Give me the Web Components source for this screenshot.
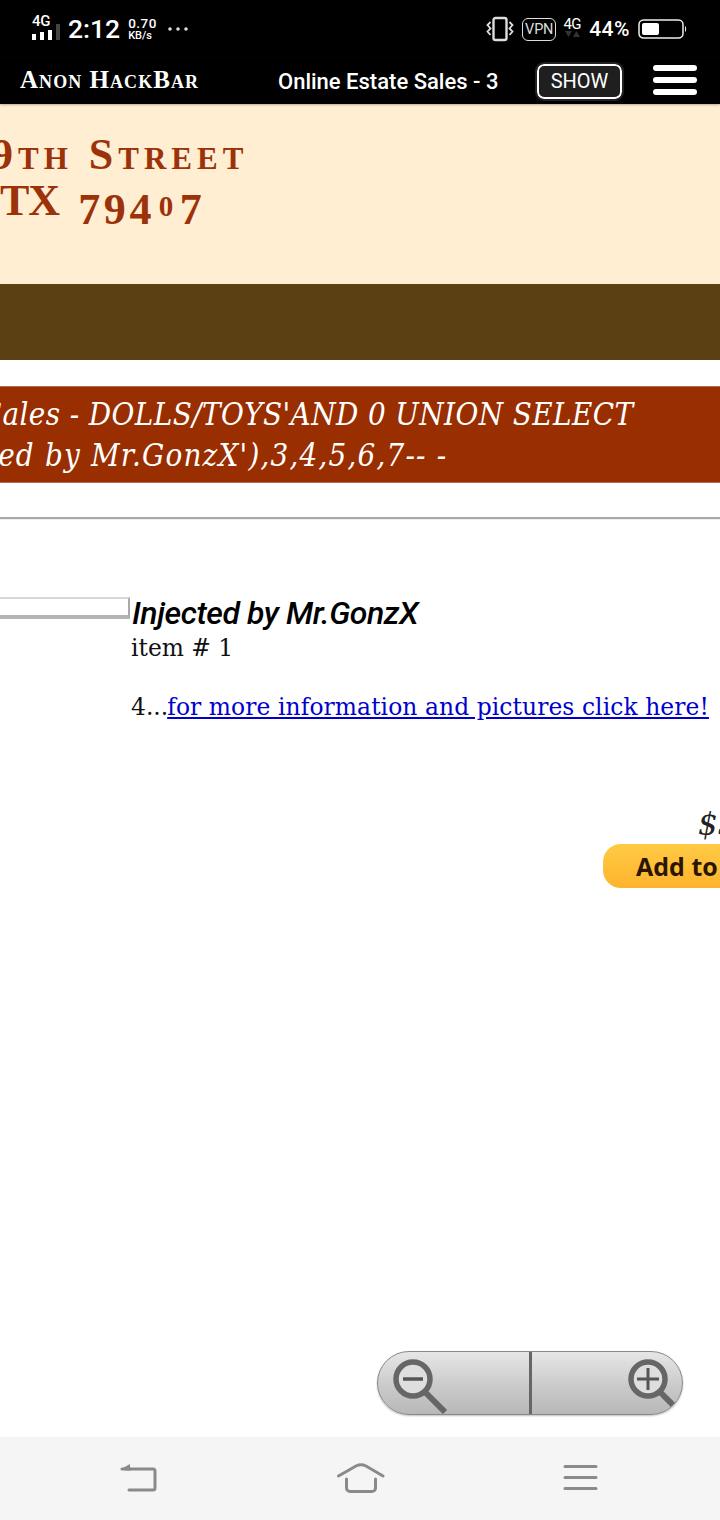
<!DOCTYPE html>
<html lang="en"><head><meta charset="utf-8"><title>Online Estate Sales</title>
<style>
html,body{margin:0;padding:0;height:1520px;overflow:hidden;background:#fff}
body{display:flex;flex-direction:column;width:720px}
</style></head><body>
<status-bar></status-bar>
<hack-bar></hack-bar>
<site-banner></site-banner>
<page-title></page-title>
<item-listing></item-listing>
<nav-bar></nav-bar>
<script>
function def(name,html){
  customElements.define(name,class extends HTMLElement{
    constructor(){super();this.attachShadow({mode:'open'}).innerHTML=html;}
  });
}
def('status-bar',`<style>
:host{display:flex;align-items:center;height:58px;background:#000;color:#fff;font-family:Roboto,sans-serif;flex:none}
.left{display:flex;align-items:center;margin-left:32px}
.sig{display:flex;flex-direction:column;align-items:flex-start;width:36px}
.sig b{font-size:15px;line-height:13px;font-weight:500;letter-spacing:-.3px;margin-top:-3px}
.time{font-size:26.500px;font-weight:500;line-height:28px}
.speed{display:flex;flex-direction:column;margin-left:8px;font-weight:500}
.speed span:first-child{font-size:13.500px;line-height:13px;letter-spacing:.5px}
.speed span:last-child{font-size:11px;line-height:11px}
.right{margin-left:auto;display:flex;align-items:center;margin-right:32px}
.vpn{border:1.500px solid #ddd;border-radius:6px;font-size:14.500px;color:#ddd;height:21px;width:32px;text-align:center;line-height:21px;margin-left:8px;letter-spacing:-.2px}
.net{display:flex;flex-direction:column;align-items:center;margin-left:6px;width:20px}
.net b{font-size:15px;font-weight:400;line-height:14px;letter-spacing:-.6px;margin-top:-4px}
.pct{font-size:21px;font-weight:500;margin-left:7px;letter-spacing:.5px}
svg{display:block;overflow:visible}
</style>
<div class="left">
 <div class="sig"><b>4G</b><svg width="28" height="10" viewBox="0 0 28 10" style="margin-top:2px"><rect x="0" y="4" width="4" height="6" fill="#fff"/><rect x="8" y="2" width="4" height="8" fill="#fff"/><rect x="16" y="0" width="4" height="10" fill="#fff"/><rect x="24" y="-6" width="4" height="16" fill="#444"/></svg></div>
 <span class="time">2:12</span>
 <div class="speed"><span>0.70</span><span>KB/s</span></div>
 <svg width="22" height="6" viewBox="0 0 22 6" style="margin-left:10px"><circle cx="3" cy="3" r="1.800" fill="#ddd"/><circle cx="11" cy="3" r="1.800" fill="#ddd"/><circle cx="19" cy="3" r="1.800" fill="#ddd"/></svg>
</div>
<div class="right">
 <svg width="28" height="24" viewBox="0 0 28 24" fill="none" stroke="#ddd"><rect x="7.500" y="1" width="13" height="22" rx="2" stroke-width="2.400"/><path d="M4.500 5l-3 3 3 3.500-3 3 3 3.500M23.500 5l3 3-3 3.500 3 3-3 3.500" stroke-width="1.800"/></svg>
 <div class="vpn">VPN</div>
 <div class="net"><b>4G</b><svg width="16" height="7" viewBox="0 0 16 7"><path d="M1 0h7l-3.500 6zM9 6h7l-3.500-6z" fill="#333"/></svg></div>
 <span class="pct">44%</span>
 <svg width="50" height="22" viewBox="0 0 50 22" style="margin-left:8px"><rect x="1" y="2" width="44" height="18" rx="4.500" fill="none" stroke="#eee" stroke-width="1.500"/><rect x="4" y="5" width="17" height="12" rx="2" fill="#fff"/><path d="M47 8c1.500 .5 1.500 5.500 0 6z" fill="#eee"/></svg>
</div>`);
def('hack-bar',`<style>
:host{display:flex;align-items:center;height:46px;background:#000;color:#fff;flex:none;box-shadow:0 1px 2px rgba(120,110,90,.5);position:relative}
.logo{font:bold 25px "Liberation Serif",serif;font-variant:small-caps;margin-left:20px;width:258px;letter-spacing:1.050px;margin-top:-2px;white-space:nowrap}
.title{font:500 22px Roboto,sans-serif;width:259px;white-space:nowrap}
.show{box-sizing:border-box;width:85px;height:35px;border:2.500px solid #fff;border-radius:7px;background:#1f1f1f;outline:2px solid #222;font:400 20px/31px Roboto,sans-serif;text-align:center;margin-top:0}
.menu{margin-left:31px;display:flex;flex-direction:column;gap:6px;margin-top:-2px}
.menu i{display:block;width:44px;height:6px;background:#fff;border-radius:3px}
</style>
<div class="logo">Anon HackBar</div><div class="title">Online Estate Sales - 3</div><div class="show">SHOW</div><div class="menu"><i></i><i></i><i></i></div>`);
def('site-banner',`<style>
:host{display:block;flex:none;height:180px;background:#ffeed1;color:#9c3209;font-family:"Liberation Serif",serif;font-weight:bold;overflow:hidden;white-space:nowrap;box-sizing:border-box;padding-top:26px}
.a{font-size:44px;line-height:50px;font-variant:small-caps;letter-spacing:5px;margin-left:-9px;height:50px}
.b{font-size:44px;line-height:50px;margin-left:0;margin-top:-4px;height:50px}
.b i{font-style:normal;vertical-align:-9px;letter-spacing:3.700px}
.b u{text-decoration:none;font-size:29px;vertical-align:-1px;letter-spacing:6.500px;margin-left:3.500px}
.b s{text-decoration:none;margin-right:19px;letter-spacing:-1px}
</style>
<div class="a">9th Street</div>
<div class="b"><s>TX</s><i>794</i><u>0</u><i>7</i></div>`);
def('page-title',`<style>
:host{display:block;flex:none}
.brown{height:76px;background:#5a4012}
.red{margin-top:26px;height:97px;background:#992e00;color:#fff;font:italic 31px/41px "DejaVu Serif Condensed","DejaVu Serif",serif;white-space:nowrap;overflow:hidden;box-sizing:border-box;padding-top:7px;letter-spacing:.4px;border-top:1px solid #b56a4a;border-bottom:1px solid #b56a4a}
.red div:first-child{margin-left:-17px}
.red div:last-child{margin-left:-90px;letter-spacing:1.200px}
hr{margin:34px 0 0;border:0;height:2px;background:#a8a8a8;box-shadow:0 1px 0 #eee}
</style>
<div class="brown"></div>
<div class="red"><div>Sales - DOLLS/TOYS'AND 0 UNION SELECT</div><div>Injected by Mr.GonzX'),3,4,5,6,7-- -</div></div>
<hr>`);
def('zoom-control',`<style>
:host{display:flex;position:absolute;right:37px;bottom:22px;width:306px;height:64px;box-sizing:border-box;border:1.500px solid #888;border-radius:32px;overflow:hidden;background:linear-gradient(#e6e6e6,#c8c8c8 60%,#b8b8b8);box-shadow:0 1px 2px rgba(0,0,0,.25)}
.b{flex:1;display:flex;align-items:center}
.b+.b{border-left:3px solid #666;justify-content:flex-end}
svg{display:block}
</style>
<div class="b"><svg width="62" height="62" viewBox="0 0 62 62" style="margin-left:10px;margin-top:4px" fill="none" stroke="#666"><circle cx="25" cy="25" r="17" fill="#dedede" stroke-width="5.500"/><path d="M37 38l20 20" stroke-width="6"/><path d="M15 25h20" stroke-width="3.500" stroke="#555"/></svg></div>
<div class="b"><svg width="62" height="62" viewBox="0 0 62 62" style="margin-right:-3px;margin-top:4px" fill="none" stroke="#666"><circle cx="25" cy="25" r="17" fill="#dedede" stroke-width="5.500"/><path d="M37 38l20 20" stroke-width="6"/><path d="M14 25h22M25 14v22" stroke-width="3" stroke="#555"/></svg></div>`);
def('item-listing',`<style>
:host{display:block;flex:1;position:relative;overflow:hidden;font-family:"DejaVu Serif",serif;color:#111}
.row{display:flex;padding-top:78px}
.thumb{flex:none;box-sizing:border-box;width:130px;height:22px;background:#fff;border-right:2px solid #aaa;border-bottom:4px solid #b4b4b4;border-top:2px solid #d8d8d8}
.txt{margin-left:1px;min-width:0;white-space:nowrap}
h2{margin:-3px 0 3px 1px;font:italic 500 32px/38px Roboto,sans-serif;letter-spacing:-.45px;color:#000}
p{margin:0;font-size:23.400px;line-height:27px}
p.d{margin-top:32px}
a{color:#0000cc;text-decoration:underline;letter-spacing:.08px;margin-left:-1px}
.buy{position:absolute;top:287px;left:603px;width:200px}
.price{font:italic 31px/36px "DejaVu Serif",serif;margin-left:95px;color:#222}
.btn{display:block;margin-top:2px;height:44px;border-radius:18px;background:linear-gradient(#ffca45,#fdb42c);font:bold 25px/44px "Open Sans",sans-serif;color:#2a1500;padding-left:33px;white-space:nowrap}
</style>
<div class="row"><div class="thumb"></div><div class="txt"><h2>Injected by Mr.GonzX</h2><p>item # 1</p><p class="d">4...<a href="#">for more information and pictures click here!</a></p></div></div>
<div class="buy"><div class="price">$5</div><span class="btn">Add to Cart</span></div>
<zoom-control></zoom-control>`);
def('nav-bar',`<style>
:host{display:flex;flex:none;height:83px;background:#f5f5f5;align-items:center;position:relative}
.i{position:absolute;top:26px}
svg{display:block}
</style>
<svg class="i" style="left:120px" width="40" height="34" viewBox="0 0 40 34" fill="none" stroke="#8a8a8a" stroke-width="3" stroke-linecap="round"><path d="M6 6h27a2 2 0 0 1 2 2v17a2 2 0 0 1-2 2H9"/><path d="M2 5.500L10 1v5z" fill="#8a8a8a" stroke="none"/><path d="M2 6h8" /></svg>
<svg class="i" style="left:336px" width="50" height="34" viewBox="0 0 50 34" fill="none" stroke="#8a8a8a" stroke-width="3" stroke-linecap="round"><path d="M2.500 13L20 3q5-2.500 10 0L47 13"/><path d="M10.500 16v9a3.500 3.500 0 0 0 3.500 3.500h22a3.500 3.500 0 0 0 3.500-3.500v-9" /></svg>
<svg class="i" style="left:563px" width="36" height="34" viewBox="0 0 36 34" fill="none" stroke="#8a8a8a" stroke-width="3" stroke-linecap="round"><path d="M2 3.500h31M2 14.500h31M2 25.500h31"/></svg>`);
</script>
</body></html>
